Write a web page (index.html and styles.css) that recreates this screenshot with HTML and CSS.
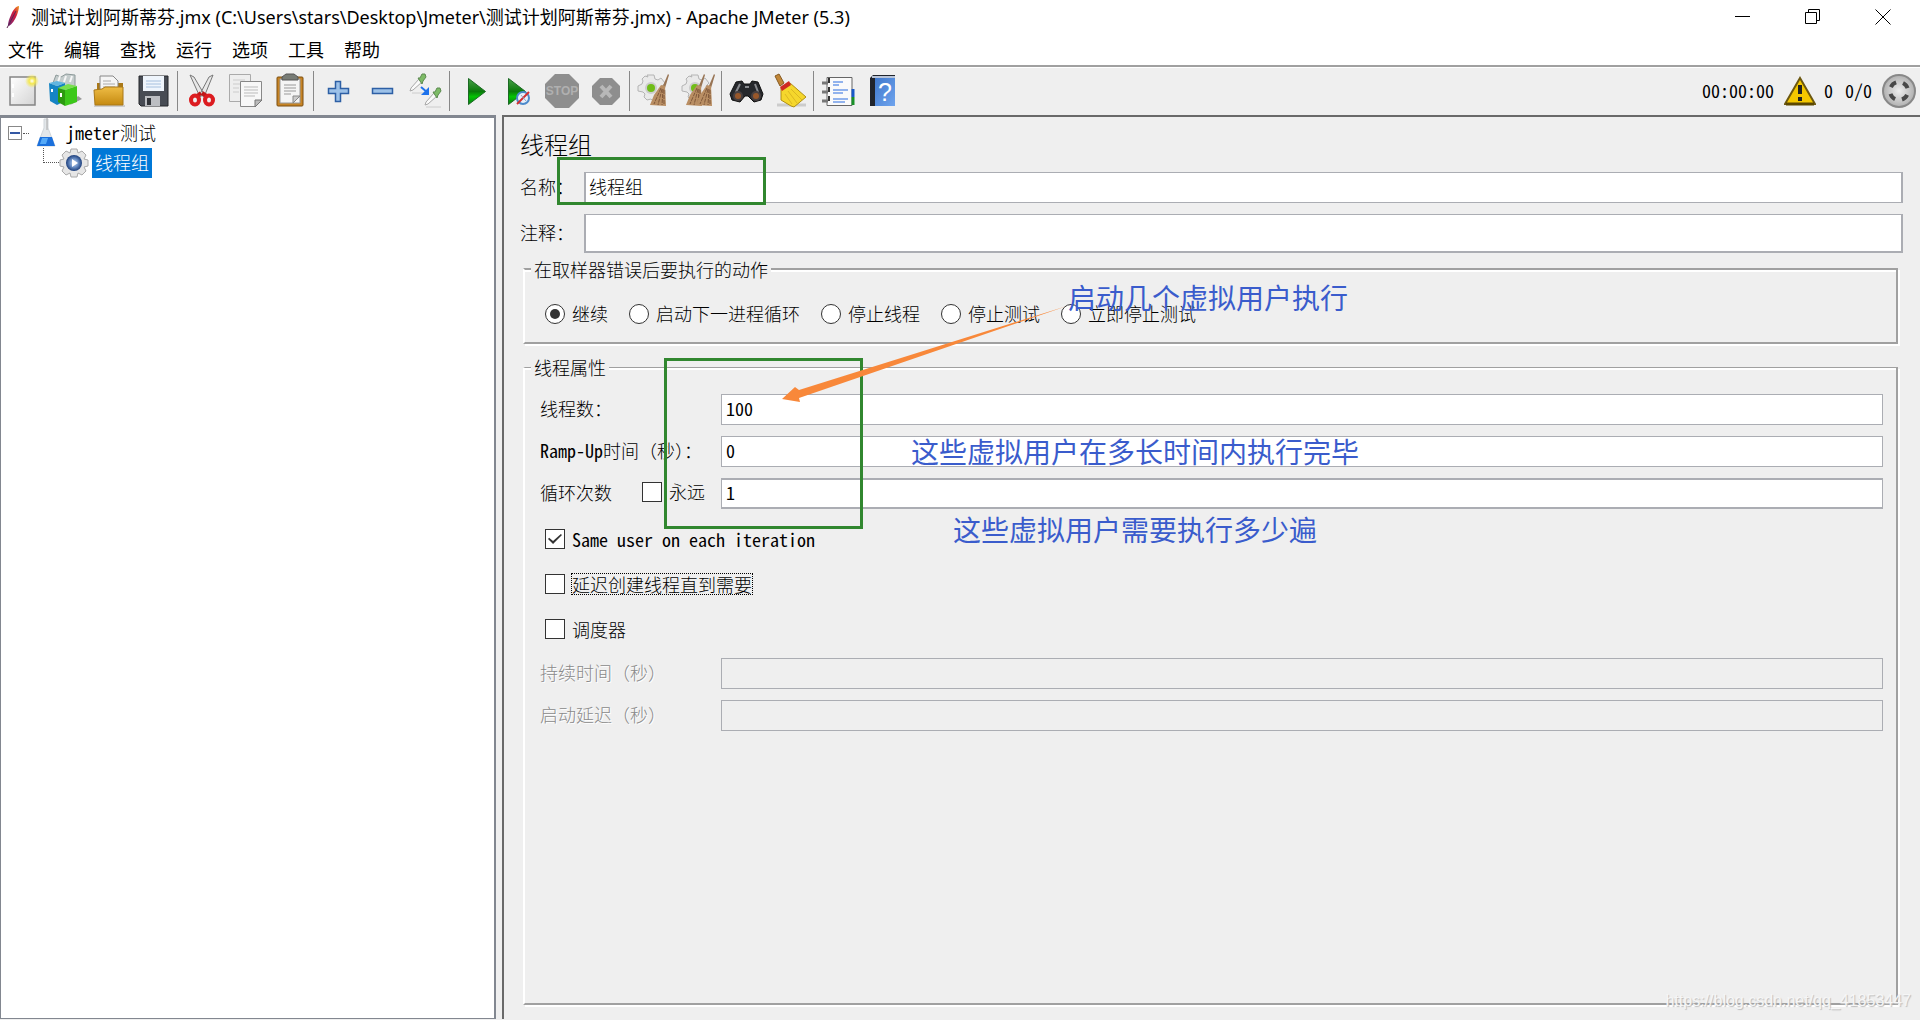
FILE: index.html
```html
<!DOCTYPE html>
<html lang="zh-CN">
<head>
<meta charset="utf-8">
<title>Apache JMeter (5.3)</title>
<link rel="stylesheet" href="styles.css">
</head>
<body>
<svg class="defs" aria-hidden="true">
  <defs>
    <linearGradient id="green" x1="0" y1="0" x2="0" y2="1"><stop offset="0" stop-color="#4aa04a"/><stop offset=".5" stop-color="#0a7a0a"/><stop offset=".7" stop-color="#04c404"/><stop offset="1" stop-color="#0a7a14"/></linearGradient>
    <linearGradient id="paper" x1="0" y1="0" x2="1" y2="1"><stop offset="0" stop-color="#fff"/><stop offset="1" stop-color="#d4d4d4"/></linearGradient>
    <linearGradient id="folder" x1="0" y1="0" x2="0" y2="1"><stop offset="0" stop-color="#eebc45"/><stop offset="1" stop-color="#c58a10"/></linearGradient>
    <linearGradient id="blue" x1="0" y1="0" x2="1" y2="1"><stop offset="0" stop-color="#3f78cc"/><stop offset="1" stop-color="#6fa4ee"/></linearGradient>
    <linearGradient id="quill" x1="1" y1="0" x2="0" y2="1"><stop offset="0" stop-color="#f09a20"/><stop offset=".4" stop-color="#d01c40"/><stop offset="1" stop-color="#6c2878"/></linearGradient>
    <radialGradient id="glow"><stop offset="0" stop-color="#fff"/><stop offset=".4" stop-color="#f4e850"/><stop offset="1" stop-color="#f4e850" stop-opacity="0"/></radialGradient>
    <radialGradient id="orb"><stop offset="0" stop-color="#c4d6f0"/><stop offset=".5" stop-color="#6f93c8"/><stop offset="1" stop-color="#1d3f7c"/></radialGradient>
    <radialGradient id="metal"><stop offset="0" stop-color="#eee"/><stop offset="1" stop-color="#b0b0b0"/></radialGradient>
    <g id="cog"><path d="M11 2h7l1 4 3 1 3-2 4 5-3 3 1 3 2 1v5l-4 1-2 3-1 1-5 1-2-2-4 1-3-3 1-3-2-2-5-1v-5l4-2 1-3-1-2 3-3 3 1z" fill="#e9e9e9" stroke="#b4b4b4"/><circle cx="15" cy="15" r="6" fill="#ccc"/><circle cx="15" cy="15" r="4" fill="#70bd18"/></g>
    <g id="besom"><path d="M14 0l1 1-4 13H8z" fill="#987454"/><path d="M7 11l4 1 1 20-16-1 4-10z" fill="#b98e63"/><path d="M7 14L0 30M8 15L4 31M9 15L8 31M10 16v15" stroke="#80583a" stroke-width="1" stroke-dasharray="4 1" fill="none"/></g>
    <g id="dropper"><path d="M2 18l1-3 8-9 3 3-9 8z" fill="#fafafa" stroke="#a8a8a8"/><path d="M10 5l2 0 2-4 3 0 1 3-3 4-1 3z" fill="#7dbb66" stroke="#5c8a50"/></g>
  </defs>
</svg>

<header class="titlebar">
  <svg class="quill" viewBox="0 0 14 24"><path d="M13 1c-3 0-6 4-8 9-2 4-3 8-3 10l1 1c3-2 6-6 8-11 1-3 2-6 2-9z" fill="url(#quill)"/><path d="M1 23L10 6" stroke="#5c2450" stroke-width="1"/></svg>
  <h1 class="window-title">测试计划阿斯蒂芬.jmx (C:\Users\stars\Desktop\Jmeter\测试计划阿斯蒂芬.jmx) - Apache JMeter (5.3)</h1>
  <div class="window-buttons">
    <button type="button" aria-label="最小化"><svg viewBox="0 0 16 16"><path d="M0 7.500h15"/></svg></button>
    <button type="button" aria-label="还原"><svg viewBox="0 0 16 16"><path d="M.5 3.500h11v11H.5zM3.500 3V.5h11v11H12"/></svg></button>
    <button type="button" aria-label="关闭"><svg viewBox="0 0 16 16"><path d="M.5.5l15 15M15.500.5l-15 15"/></svg></button>
  </div>
</header>

<nav class="menubar">
  <button type="button">文件</button><button type="button">编辑</button><button type="button">查找</button><button type="button">运行</button><button type="button">选项</button><button type="button">工具</button><button type="button">帮助</button>
</nav>

<div class="toolbar">
  <div class="tool-group">
    <button type="button" aria-label="新建"><svg viewBox="0 0 36 36"><rect x="6" y="4" width="25" height="28" fill="url(#paper)" stroke="#858585" stroke-width="1.500"/><path d="M9 11v4M9 20v4" stroke="#fff" stroke-width="2"/><circle cx="28" cy="8" r="7" fill="url(#glow)"/></svg></button>
    <button type="button" aria-label="模板"><svg viewBox="0 0 36 36"><path d="M22 32l12-6-4-3z" fill="#999"/><path d="M5 10l3-8 5 2 5-3 9 1v14H5z" fill="#c4cccc" stroke="#8d9a9a"/><path d="M10 9l2-6M16 9l2-6M22 9l2-6" stroke="#f6f6f6" stroke-width="2"/><path d="M1 10l8 3v19l-7-4zM9 13l8-3v18l-8 4z" fill="#1584c4"/><path d="M1 10l8-2 8 2-8 3z" fill="#62b6e0"/><path d="M10 15l7 2v16l-7-4z" fill="#2c9a10"/><path d="M17 17l12-4v16l-12 4z" fill="#3cc81a"/><path d="M10 15l10-4 9 2-12 4z" fill="#78e04c"/><path d="M4 16v3M13 20v4" stroke="#fff" stroke-width="2"/></svg></button>
    <button type="button" aria-label="打开"><svg viewBox="0 0 36 36"><path d="M2 33h31" stroke="#ccc" stroke-width="2"/><path d="M5 10h26v15H5z" fill="#a97818"/><path d="M8 3h13l5 5v15H8z" fill="#f5f5f5" stroke="#888"/><path d="M11 8h8M11 11h12M11 14h12" stroke="#aaa"/><path d="M2 17l8-1 3-2h18v18H3z" fill="url(#folder)" stroke="#a97818"/></svg></button>
    <button type="button" aria-label="保存"><svg viewBox="0 0 36 36"><path d="M3 3h29v30H5l-2-2z" fill="#484c54" stroke="#24262a"/><path d="M7 3h21v15H7z" fill="#eff5fc"/><path d="M10 8h15M10 11h15M10 14h15" stroke="#a6c0de"/><path d="M9 23h15v10H9z" fill="#bcbec2"/><path d="M11 25h4v7h-4z" fill="#303338"/></svg></button>
  </div>
  <div class="tool-group">
    <button type="button" aria-label="剪切"><svg viewBox="0 0 36 36"><path d="M6 2l4 2 10 17-4 3zM29 2l-4 2-9 17 4 3z" fill="#e8e8e8" stroke="#777"/><path d="M17 20l-5 4M18 20l6 4" stroke="#c01818" stroke-width="4"/><ellipse cx="11" cy="27" rx="4" ry="4.500" fill="none" stroke="#dc1c20" stroke-width="4"/><ellipse cx="25" cy="27" rx="4" ry="4.500" fill="none" stroke="#dc1c20" stroke-width="4"/></svg></button>
    <button type="button" aria-label="复制"><svg viewBox="0 0 36 36"><path d="M1.500 1.500h21v27h-21z" fill="#eee" stroke="#aaa"/><path d="M5 7h12M5 11h12M5 15h6M5 19h6" stroke="#ccc"/><path d="M12.500 8.500h21v19l-6 6h-15z" fill="#f8f8f8" stroke="#888"/><path d="M27 34v-7h7z" fill="#bbb" stroke="#777"/><path d="M16 14h14M16 17h14M16 20h14M16 23h11" stroke="#bbb"/></svg></button>
    <button type="button" aria-label="粘贴"><svg viewBox="0 0 36 36"><rect x="5" y="4" width="26" height="29" rx="1" fill="#c78425" stroke="#7c4f10"/><path d="M8 6h20v24H8z" fill="#f5f5f5" stroke="#999"/><path d="M10 7V4l4-3h8l4 3v3z" fill="#777b75" stroke="#555"/><path d="M12 12h12M12 15h12M12 18h12M12 21h7" stroke="#999"/><path d="M21 30v-7h7z" fill="#ccc" stroke="#888"/></svg></button>
  </div>
  <div class="tool-group">
    <button type="button" aria-label="展开"><svg viewBox="0 0 36 36"><path d="M15.500 8.500h5v7h8v5h-8v8h-5v-8h-7v-5h7z" fill="#9cc1e8" stroke="#2d5fa5" stroke-width="1.500"/></svg></button>
    <button type="button" aria-label="收起"><svg viewBox="0 0 36 36"><path d="M8.500 15.500h20v5h-20z" fill="#9cc1e8" stroke="#2d5fa5" stroke-width="1.500"/></svg></button>
    <button type="button" aria-label="切换"><svg viewBox="0 0 36 36"><path d="M4 20h12M18 34h15" stroke="#ccc"/><use href="#dropper"/><use href="#dropper" x="15" y="14"/><path d="M13 14l7 6" fill="none" stroke="#1d72ec" stroke-width="2"/><path d="M21 14v8h-8z" fill="#1d72ec"/></svg></button>
  </div>
  <div class="tool-group">
    <button type="button" aria-label="启动"><svg viewBox="0 0 36 36"><path d="M12.500 5.500v26l17-13z" fill="url(#green)" stroke="#1c6a24"/></svg></button>
    <button type="button" aria-label="不停顿开始"><svg viewBox="0 0 36 36"><path d="M8.500 5.500v26l17-13z" fill="url(#green)" stroke="#1c6a24"/><circle cx="23" cy="25" r="6" fill="#e7f0fa" stroke="#4d8acb" stroke-width="2"/><path d="M17 31l12-12" stroke="#d23030" stroke-width="2"/><path d="M21 22l5 6" stroke="#8ea4c4"/></svg></button>
    <button type="button" aria-label="停止" disabled><svg viewBox="0 0 36 36"><path d="M11 1h14l10 10v14L25 35H11L1 25V11z" fill="#8e8e8e"/><text x="18" y="22" class="stop-text">STOP</text></svg></button>
    <button type="button" aria-label="关闭线程" disabled><svg viewBox="0 0 36 36"><path d="M12 5h12l8 8v11l-8 8H12l-8-8V13z" fill="#8e8e8e"/><path d="M13 13l10 11M23 13L13 24" stroke="#b8b8b8" stroke-width="4"/></svg></button>
  </div>
  <div class="tool-group">
    <button type="button" aria-label="清除"><svg viewBox="0 0 36 36"><use href="#cog"/><use href="#besom" x="18" y="1"/></svg></button>
    <button type="button" aria-label="清除全部"><svg viewBox="0 0 36 36"><use href="#cog"/><use href="#besom" x="10" y="1"/><use href="#besom" x="20" y="1"/></svg></button>
  </div>
  <div class="tool-group">
    <button type="button" aria-label="查找"><svg viewBox="0 0 36 36"><path d="M8 9l6-1 2 3h6l2-3 6 1 5 12-2 6-7 2-6-6h-3l-5 6-8-2-2-6z" fill="#26282c" stroke="#101010"/><path d="M12 11l-4 8M27 11l3 8M17 14h4" stroke="#8a8c90" stroke-width="2"/><circle cx="10" cy="23" r="4" fill="#98572a" stroke="#484040" stroke-width="2"/><circle cx="28" cy="23" r="4" fill="#98572a" stroke="#484040" stroke-width="2"/></svg></button>
    <button type="button" aria-label="重置搜索"><svg viewBox="0 0 36 36"><path d="M5 32h29" stroke="#ccc" stroke-width="3"/><path d="M3 3l4-2 5 9-4 3z" fill="#c18738" stroke="#875a20"/><path d="M9 15l9-5 16 14-12 10-3-1-10-6z" fill="#f5d72c" stroke="#b08f14"/><path d="M13 21l7 10M16 18l9 12M19 16l11 11" stroke="#dcb822"/><path d="M8 14l9-6 2 4-9 6z" fill="#cf2a22"/></svg></button>
  </div>
  <div class="tool-group">
    <button type="button" aria-label="函数助手"><svg viewBox="0 0 36 36"><path d="M7 4.500h25v28H7z" fill="#fafafa" stroke="#666"/><path d="M33 16v8" stroke="#1858c8" stroke-width="3"/><path d="M33 24v8" stroke="#189028" stroke-width="3"/><path d="M9 5v27" stroke="#333" stroke-dasharray="5 4" stroke-width="2"/><path d="M2 10h6M2 19h6M2 28h6" stroke="#777" stroke-width="3"/><path d="M13 9h10M13 12h6M13 17h15M13 20h10M13 26h15M13 29h12" stroke="#2a6ce0"/></svg></button>
    <button type="button" aria-label="帮助"><svg viewBox="0 0 36 36"><path d="M6 5l3-3h22v31H6z" fill="#20242c"/><path d="M8 3h23v2H8z" fill="#b8c4d8"/><path d="M11 5h20v28H11z" fill="url(#blue)"/><text x="21" y="28" class="help-text">?</text></svg></button>
  </div>
  <div class="status">
    <span class="latin">00:00:00</span>
    <svg class="warn" viewBox="0 0 32 30"><path d="M16 2l15 26H1z" fill="#f5c800" stroke="#6c5810" stroke-width="2"/><path d="M2 28h28" stroke="#5c4800" stroke-width="3"/><path d="M16 9v9M16 21v4" stroke="#222" stroke-width="4"/></svg>
    <span class="latin">0</span>
    <span class="latin threads">0/0</span>
    <svg class="remote" viewBox="0 0 34 34"><circle cx="17" cy="17" r="16" fill="url(#metal)" stroke="#888" stroke-width="2"/><circle cx="17" cy="17" r="9" fill="none" stroke="#484848" stroke-width="4" stroke-dasharray="7 7.100" stroke-dashoffset="-4"/></svg>
  </div>
</div>

<div class="workspace">
  <aside class="tree">
    <ul>
      <li class="node root">
        <button type="button" class="expander" aria-label="折叠"></button><span class="twig"></span>
        <svg class="flask" viewBox="0 0 22 30"><path d="M9 1h4v9l7 18H2l7-18z" fill="#e3e7ea" stroke="#d0d6da"/><path d="M12 0v12" stroke="#aaa"/><path d="M5 19h12l3 9H2z" fill="#1b70dc"/><path d="M7 20h6l-2 6H5z" fill="#55aaf8"/></svg>
        <span class="node-label"><span class="latin">jmeter</span>测试</span>
      </li>
      <li class="node child">
        <span class="branch"></span>
        <svg class="gear" viewBox="0 0 30 30"><path d="M12 1h6l1 4 4-2 4 4-2 4 4 1v6l-4 1 2 4-4 4-4-2-1 4h-6l-1-4-4 2-4-4 2-4-4-1v-6l4-1-2-4 4-4 4 2z" fill="#e6e6e6" stroke="#aaa"/><circle cx="15" cy="15" r="8" fill="url(#orb)"/><path d="M13 11v8l6-4z" fill="#fff"/></svg>
        <span class="node-label selected">线程组</span>
      </li>
    </ul>
  </aside>

  <main class="editor">
    <h2 class="editor-title">线程组</h2>
    <div class="row head-row"><label for="name">名称：</label><input id="name" class="field framed" type="text" value="线程组"></div>
    <div class="row head-row"><label for="comment">注释：</label><input id="comment" class="field framed tall" type="text"></div>

    <fieldset class="group on-error">
      <legend>在取样器错误后要执行的动作</legend>
      <label><input type="radio" name="err" checked><span>继续</span></label>
      <label><input type="radio" name="err"><span>启动下一进程循环</span></label>
      <label><input type="radio" name="err"><span>停止线程</span></label>
      <label><input type="radio" name="err"><span>停止测试</span></label>
      <label><input type="radio" name="err"><span>立即停止测试</span></label>
    </fieldset>

    <fieldset class="group props">
      <legend>线程属性</legend>
      <div class="row"><label for="threads">线程数：</label><input id="threads" class="field latin" type="text" value="100"></div>
      <div class="row"><label for="ramp"><span class="latin">Ramp-Up</span>时间（秒）：</label><input id="ramp" class="field latin" type="text" value="0"></div>
      <div class="row"><div class="loop"><label for="loops">循环次数</label><label class="tick"><input type="checkbox"><span>永远</span></label></div><input id="loops" class="field latin heavy" type="text" value="1"></div>
      <div class="checks">
        <label class="tick"><input type="checkbox" checked><span class="latin">Same user on each iteration</span></label>
        <label class="tick"><input type="checkbox"><span class="focused">延迟创建线程直到需要</span></label>
        <label class="tick"><input type="checkbox"><span>调度器</span></label>
      </div>
      <div class="row off"><label for="duration">持续时间（秒）</label><input id="duration" class="field" type="text" disabled></div>
      <div class="row off"><label for="delay">启动延迟（秒）</label><input id="delay" class="field" type="text" disabled></div>
    </fieldset>

    <div class="mark mark-name"></div>
    <div class="mark mark-values"></div>
    <svg class="arrow" viewBox="0 0 286 98"><path d="M0 93l13-12 4 3L285 0 17 92l1 4z" fill="#f8883a"/></svg>
    <p class="note note-users">启动几个虚拟用户执行</p>
    <p class="note note-ramp">这些虚拟用户在多长时间内执行完毕</p>
    <p class="note note-loops">这些虚拟用户需要执行多少遍</p>
    <p class="watermark">https://blog.csdn.net/qq_41853447</p>
  </main>
</div>
</body>
</html>
```
FILE: styles.css
```css
* { box-sizing: border-box; }

body {
  margin: 0;
  min-height: 100vh;
  display: flex;
  flex-direction: column;
  background: #efefef;
  color: #000;
  font: 300 18px/24px "Noto Sans CJK SC", sans-serif;
}

button {
  border: 0;
  padding: 0;
  background: none;
  color: inherit;
  font: inherit;
}

svg { display: block; flex: none; }
.defs { position: absolute; width: 0; height: 0; }
.latin { font-family: "Noto Sans Mono CJK SC", "Liberation Mono", monospace; font-size: 18px; font-weight: 400; }

.titlebar {
  height: 34px;
  display: flex;
  align-items: center;
  padding: 0 2px 0 6px;
  background: #fff;
}
.quill { width: 14px; height: 24px; }
.window-title {
  flex: 1;
  margin: 0 0 0 11px;
  font: 400 18px/24px "Noto Sans", "Noto Sans CJK SC", sans-serif;
}
.window-buttons { display: flex; }
.window-buttons button {
  width: 70px;
  height: 34px;
  display: flex;
  align-items: center;
  justify-content: center;
}
.window-buttons svg { width: 16px; height: 16px; fill: none; stroke: #000; }

.menubar {
  height: 33px;
  display: flex;
  align-items: center;
  gap: 20px;
  padding: 0 8px 2px;
  background: #fff;
  border-bottom: 2px solid #a0a0a0;
  font: 400 18px/24px "Noto Sans CJK SC", sans-serif;
}

.toolbar {
  height: 48px;
  display: flex;
  align-items: center;
  box-shadow: inset 0 1px #fff;
}
.tool-group { display: flex; }
.tool-group + .tool-group { border-left: 1px solid #888; margin-left: 1px; padding-left: 2px; }
.tool-group button {
  width: 44px;
  height: 40px;
  display: flex;
  align-items: center;
  justify-content: center;
}
.tool-group svg { width: 36px; height: 36px; }
.stop-text { font: 700 12px "Liberation Sans", sans-serif; fill: #b0b0b0; text-anchor: middle; }
.help-text { font: 400 25px "Liberation Sans", sans-serif; fill: #fff; text-anchor: middle; }
.status {
  margin-left: auto;
  display: flex;
  align-items: center;
  padding-right: 4px;
}
.status span { padding-bottom: 2px; }
.warn { width: 32px; height: 30px; margin: 0 8px 0 10px; }
.threads { margin: 0 10px 0 12px; }
.remote { width: 34px; height: 34px; }

.workspace { flex: 1; display: flex; gap: 6px; padding-bottom: 1px; }

.tree {
  flex: none;
  width: 496px;
  background: #fff;
  border: solid #828790;
  border-width: 3px 2px 1px 1px;
}
.tree ul { margin: 0; padding: 0; list-style: none; }
.node { height: 30px; display: flex; align-items: center; }
.root { padding-left: 7px; }
.expander {
  width: 14px;
  height: 14px;
  border: 1px solid #888;
  display: flex;
  align-items: center;
}
.expander::before { content: ""; flex: 1; margin: 0 1px; height: 2px; background: #3458a4; }
.twig { width: 6px; border-top: 1px dotted #555; margin: 0 6px 0 1px; }
.flask { width: 22px; height: 30px; }
.root .node-label { margin-left: 9px; padding-bottom: 2px; }
.child { padding-left: 42px; }
.branch {
  width: 16px;
  height: 15px;
  align-self: flex-start;
  border: dotted #555;
  border-width: 0 0 1px 1px;
}
.gear { width: 30px; height: 30px; }
.selected { margin-left: 3px; padding: 2px 3px 4px; background: #0078d7; color: #fff; }

.editor {
  position: relative;
  flex: 1;
  display: flex;
  flex-direction: column;
  padding: 13px 17px 14px 16px;
  border: solid #696969;
  border-width: 2px 0 0 2px;
}
.editor-title { margin: 0 0 14px; font-size: 24px; font-weight: 300; line-height: 28px; }
.row { display: flex; align-items: center; margin-bottom: 11px; }
.row label { padding-bottom: 3px; }
.head-row label { width: 64px; }
.field {
  flex: 1;
  min-width: 0;
  height: 31px;
  border: 1px solid #abadb3;
  border-radius: 0;
  padding: 0 4px 3px;
  background: #fff;
  color: #000;
}
.framed { font-family: inherit; font-size: 18px; font-weight: 300; border-width: 1px 2px; padding: 0 3px 4px; }
.heavy { border-width: 2px 1px; }
.tall { height: 39px; border-bottom-width: 2px; }
.field:disabled { background: #efefef; }

.group {
  min-width: 0;
  margin: 0 5px 0 3px;
  padding: 0 13px;
  border: 2px solid #a0a0a0;
  border-left-color: #fff;
  box-shadow: 2px 2px #fff, inset 0 2px #fff;
}
.group legend { margin-left: -7px; padding: 0 3px; background: #efefef; line-height: 24px; }
.on-error { display: flex; gap: 21px; height: 87px; margin-top: -7px; padding: 21px 20px 0; }
.on-error legend { margin-left: -14px; }
.on-error label { display: flex; align-items: center; gap: 7px; height: 24px; white-space: nowrap; }
.on-error span { padding-bottom: 3px; }
.props { flex: 1; margin-top: 11px; border-top-width: 1px; padding-top: 15px; }
.props .row > label, .loop { width: 181px; white-space: nowrap; }
.props .row { margin-left: 2px; }
.loop { display: flex; justify-content: space-between; padding-right: 16px; }

input[type="radio"], input[type="checkbox"] {
  appearance: none;
  flex: none;
  width: 20px;
  height: 20px;
  margin: 0;
  border: 1px solid #333;
  background: #fff;
  display: grid;
  place-items: center;
}
input[type="radio"] { border-radius: 50%; }
input[type="radio"]:checked::before { content: ""; width: 10px; height: 10px; border-radius: 50%; background: #333; }
input[type="checkbox"]:checked::before {
  content: "";
  width: 14px;
  height: 10px;
  background: #333;
  clip-path: polygon(0 50%, 8% 38%, 36% 70%, 92% 0, 100% 10%, 36% 100%);
}
.tick { display: flex; align-items: center; gap: 7px; height: 24px; }
.row .tick { padding: 0; }
.row .tick span { padding-bottom: 3px; }
.checks { display: flex; flex-direction: column; gap: 21px; margin: 18px 0 17px 7px; }
.focused { outline: 1px dotted #000; line-height: 20px; }
.off label { color: #8a8a8a; text-shadow: 1px 1px #fff; }

/* Annotations drawn over the form */
.mark { position: absolute; border: 3px solid #31872f; }
.mark-name { left: 53px; top: 40px; width: 209px; height: 48px; }
.mark-values { left: 160px; top: 241px; width: 199px; height: 171px; }
.arrow { position: absolute; left: 278px; top: 189px; width: 286px; height: 98px; }
.note {
  position: absolute;
  margin: 0;
  color: #3a5ccc;
  font: 400 28px/32px "Noto Sans CJK SC", sans-serif;
  white-space: nowrap;
}
.note-users { left: 564px; top: 164px; }
.note-ramp { left: 407px; top: 318px; }
.note-loops { left: 449px; top: 396px; }
.watermark {
  position: absolute;
  right: 9px;
  bottom: 8px;
  margin: 0;
  color: #f6f6f6;
  font: 400 16px/20px "Liberation Sans", sans-serif;
  text-shadow: 1px 1px 1px #bbb;
}
```
